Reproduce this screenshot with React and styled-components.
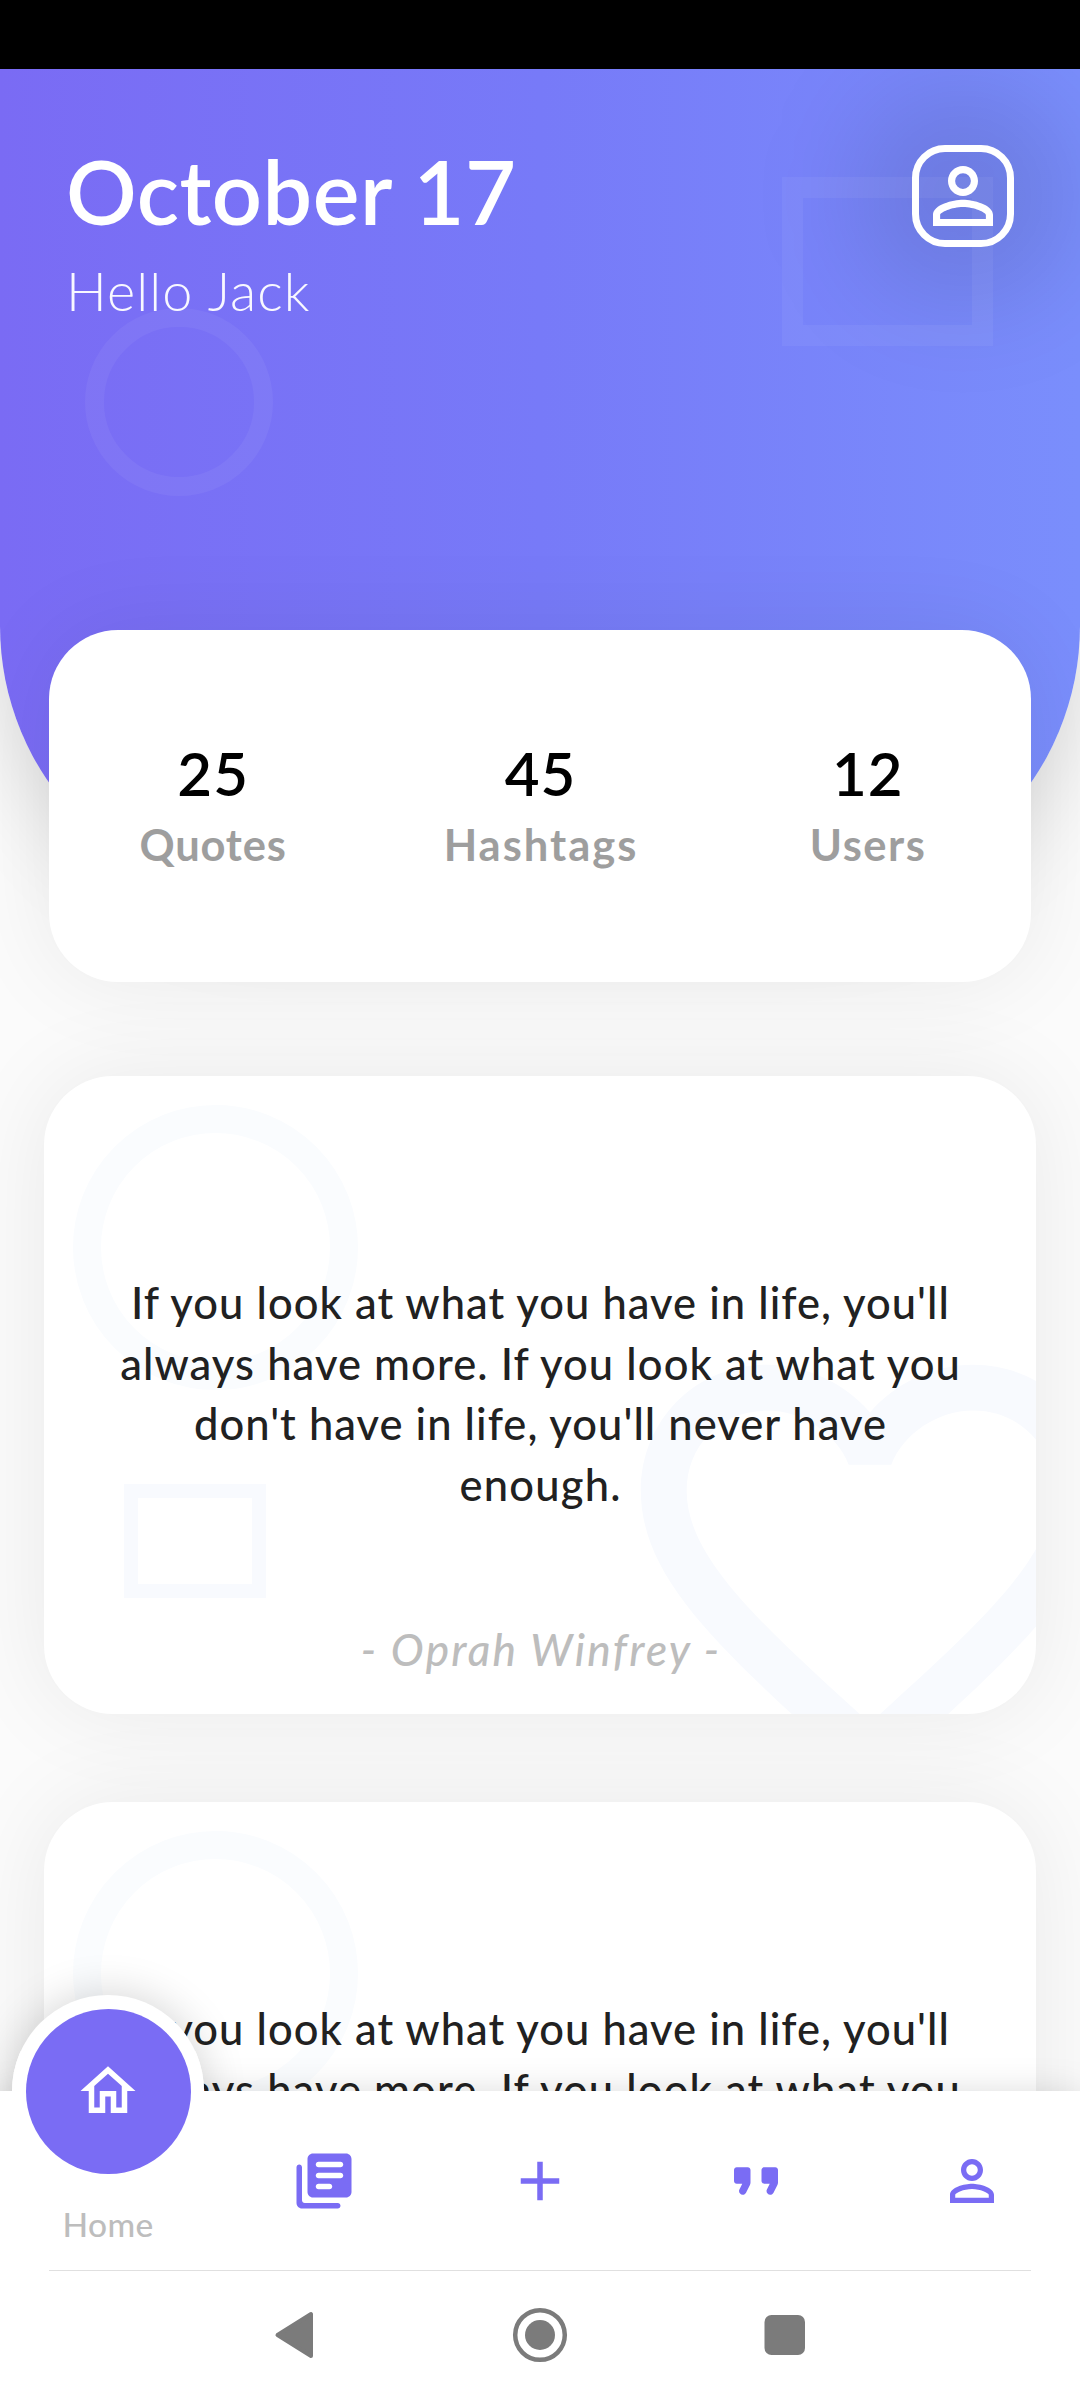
import React from "react";
import styled, { createGlobalStyle, css } from "styled-components";
import { MdAdd, MdPersonOutline } from "react-icons/md";

const PURPLE = "#7a6cf4";

const GlobalStyle = createGlobalStyle`
  * { box-sizing: border-box; }
  html, body { margin: 0; padding: 0; background: #fbfbfb; }
  body { font-family: Lato, "Open Sans", sans-serif; }
  svg { display: block; }
`;

const Screen = styled.div`
  width: 1080px;
  height: 2400px;
  display: flex;
  flex-direction: column;
  overflow: hidden;
  background: #fbfbfb;
`;

const StatusBar = styled.div`
  flex: none;
  height: 69px;
  background: #000;
`;

const Content = styled.main`
  flex: 1;
  min-height: 0;
  overflow: hidden;
  display: flex;
  flex-direction: column;
`;

const Header = styled.header`
  position: relative;
  isolation: isolate;
  flex: none;
  height: 832px;
  padding: 76px 66px 0;
  display: flex;
  justify-content: space-between;
  align-items: flex-start;
  border-radius: 0 0 275px 275px;
  background: linear-gradient(90deg, #7a6bf4 0%, #777af8 50%, #7a8efc 100%);
  box-shadow: 0 20px 90px rgba(0, 0, 0, 0.14);
`;

const Greeting = styled.div`
  display: flex;
  flex-direction: column;
  margin-top: -4px;
`;

const DateTitle = styled.h1`
  margin: 0;
  font-size: 88px;
  line-height: 100px;
  font-weight: 600;
  letter-spacing: 0.5px;
  white-space: nowrap;
  color: #fff;
`;

const Hello = styled.div`
  margin-top: 17px;
  font-size: 54px;
  line-height: 66px;
  font-weight: 300;
  letter-spacing: 1.1px;
  white-space: nowrap;
  color: rgba(255, 255, 255, 0.95);
`;

const Avatar = styled.button`
  position: relative;
  width: 102px;
  height: 102px;
  padding: 0;
  display: flex;
  align-items: center;
  justify-content: center;
  border: 7px solid #fff;
  border-radius: 33px;
  background: none;
  color: #fff;

  &::before {
    content: "";
    position: absolute;
    z-index: -1;
    inset: -62px;
    border-radius: 90px;
    background: rgba(0, 0, 0, 0.1);
    filter: blur(50px);
  }

  svg {
    flex: none;
  }
`;

const Outline = styled.span`
  position: absolute;
  z-index: ${(p) => (p.$behind ? -1 : 0)};
  left: ${(p) => p.$x}px;
  top: ${(p) => p.$y}px;
  width: ${(p) => p.$w}px;
  height: ${(p) => p.$h}px;
  border: ${(p) => p.$line}px solid ${(p) => p.$color};
  border-radius: ${(p) => (p.$round ? "50%" : "0")};
`;

const cardBase = css`
  flex: none;
  background: #fff;
  border-radius: 69px;
  box-shadow: 0 0 95px rgba(0, 0, 0, 0.075);
`;

const StatsCard = styled.section`
  ${cardBase}
  position: relative;
  height: 352px;
  margin: -271px 49px 0;
  display: grid;
  grid-template-columns: repeat(3, 1fr);
  align-content: center;
`;

const Stat = styled.div`
  display: flex;
  flex-direction: column;
  align-items: center;
`;

const StatValue = styled.div`
  margin-top: -4px;
  margin-right: -1px;
  font-size: 60px;
  line-height: 76px;
  font-weight: 600;
  letter-spacing: 1px;
  color: #000;
`;

const StatLabel = styled.div`
  margin-top: 3px;
  font-size: 43.5px;
  line-height: 60px;
  font-weight: 700;
  letter-spacing: ${(p) => p.$track}px;
  margin-right: ${(p) => -p.$track}px;
  color: #9e9e9e;
`;

const QuoteList = styled.section`
  flex: none;
  display: flex;
  flex-direction: column;
  gap: 88px;
  padding: 94px 44px 0;
`;

const QuoteCard = styled.article`
  ${cardBase}
  position: relative;
  isolation: isolate;
  height: 638px;
  padding-top: 196px;
  display: flex;
  flex-direction: column;
  align-items: center;
`;

const Decoration = styled.div`
  position: absolute;
  z-index: -1;
  inset: 0;
  overflow: hidden;
  border-radius: 69px;
`;

const HeartIcon = styled.svg`
  position: absolute;
  left: 551px;
  top: 220px;
  width: 550px;
  height: 550px;
  fill: #f8fafe;
`;

const QuoteText = styled.p`
  margin: 0;
  display: flex;
  flex-direction: column;
  align-items: center;
  color: #212121;
`;

const QuoteLine = styled.span`
  font-size: 43.5px;
  line-height: 60.5px;
  font-weight: 500;
  white-space: nowrap;
  letter-spacing: ${(p) => p.$track}px;
  margin-right: ${(p) => -p.$track}px;
`;

const Author = styled.div`
  margin-top: 105px;
  font-size: 44px;
  line-height: 60px;
  font-weight: 500;
  font-style: italic;
  letter-spacing: 2.3px;
  margin-right: -2.3px;
  white-space: nowrap;
  color: #bdbdbd;
`;

const BottomNav = styled.nav`
  position: relative;
  isolation: isolate;
  flex: none;
  height: 309px;
`;

const ActiveRing = styled.span`
  position: absolute;
  left: 12px;
  top: -96px;
  width: 192px;
  height: 192px;
  border-radius: 50%;
  background: #fff;
  box-shadow: 0 0 44px rgba(0, 0, 0, 0.18);
`;

const NavBody = styled.div`
  position: relative;
  height: 100%;
  display: flex;
  flex-direction: column;
  background: #fff;
  box-shadow: 0 10px 40px rgba(0, 0, 0, 0.22);
`;

const RingBase = styled.span`
  position: absolute;
  left: 12px;
  top: -40px;
  width: 192px;
  height: 40px;
  overflow: hidden;

  &::before {
    content: "";
    display: block;
    width: 192px;
    height: 192px;
    margin-top: -56px;
    border-radius: 50%;
    background: #fff;
  }
`;

const Tabs = styled.div`
  position: relative;
  flex: none;
  height: 178px;
  margin-bottom: 1px;
  display: grid;
  grid-template-columns: repeat(5, 1fr);
`;

const Tab = styled.div`
  display: flex;
  flex-direction: column;
  align-items: center;
  padding-top: ${(p) => (p.$active ? 0 : 57)}px;
  color: ${PURPLE};
`;

const ActiveButton = styled.div`
  flex: none;
  width: 165px;
  height: 165px;
  margin-top: -82.5px;
  display: flex;
  align-items: center;
  justify-content: center;
  border-radius: 50%;
  background: ${PURPLE};
  color: #fff;
`;

const TabLabel = styled.div`
  margin-top: 30px;
  font-size: 33.5px;
  line-height: 40px;
  font-weight: 500;
  letter-spacing: 0.4px;
  color: #bdbdbd;
`;

const SystemBar = styled.div`
  flex: 1;
  margin: 0 49px;
  padding-bottom: 2px;
  border-top: 1px solid #e0e0e0;
  display: flex;
  align-items: center;
  justify-content: center;
  gap: 191px;
  color: #7b7b7b;
`;

const Icon = ({ d, size = 66 }) => (
  <svg width={size} height={size} viewBox="0 0 24 24" fill="currentColor">
    <path d={d} />
  </svg>
);

const HOME =
  "M12 5.69l5 4.5V18h-2v-6H9v6H7v-7.81l5-4.5M12 3L2 12h3v8h6v-6h2v6h6v-8h3L12 3z";
const LIBRARY =
  "M3 6c-.55 0-1 .45-1 1v13c0 1.1.9 2 2 2h13c.55 0 1-.45 1-1s-.45-1-1-1H5c-.55 0-1-.45-1-1V7c0-.55-.45-1-1-1zm17-4H8c-1.1 0-2 .9-2 2v12c0 1.1.9 2 2 2h12c1.1 0 2-.9 2-2V4c0-1.1-.9-2-2-2zm-2 9h-8c-.55 0-1-.45-1-1s.45-1 1-1h8c.55 0 1 .45 1 1s-.45 1-1 1zm-4 4h-4c-.55 0-1-.45-1-1s.45-1 1-1h4c.55 0 1 .45 1 1s-.45 1-1 1zm4-8h-8c-.55 0-1-.45-1-1s.45-1 1-1h8c.55 0 1 .45 1 1s-.45 1-1 1z";
const QUOTE =
  "M7.17 17c.51 0 .98-.29 1.2-.74l1.42-2.84c.14-.28.21-.58.21-.89V8c0-.55-.45-1-1-1H5c-.55 0-1 .45-1 1v4c0 .55.45 1 1 1h2l-1.03 2.06c-.45.89.2 1.94 1.2 1.94zm10 0c.51 0 .98-.29 1.2-.74l1.42-2.84c.14-.28.21-.58.21-.89V8c0-.55-.45-1-1-1h-4c-.55 0-1 .45-1 1v4c0 .55.45 1 1 1h2l-1.03 2.06c-.45.89.2 1.94 1.2 1.94z";
const HEART =
  "M12.1 18.55l-.1.1-.11-.1C7.14 14.24 4 11.39 4 8.5 4 6.5 5.5 5 7.5 5c1.54 0 3.04 1 3.57 2.36h1.86C13.46 6 14.96 5 16.5 5c2 0 3.5 1.5 3.5 3.5 0 2.89-3.14 5.74-7.9 10.05M16.5 3c-1.74 0-3.41.81-4.5 2.08C10.91 3.81 9.24 3 7.5 3 4.42 3 2 5.41 2 8.5c0 3.77 3.4 6.86 8.55 11.53L12 21.35l1.45-1.32C18.6 15.36 22 12.27 22 8.5 22 5.41 19.58 3 16.5 3z";

const STATS = [
  { value: "25", label: "Quotes", track: 0.8 },
  { value: "45", label: "Hashtags", track: 2 },
  { value: "12", label: "Users", track: 1.5 },
];

const QUOTE_LINES = [
  { text: "If you look at what you have in life, you'll", track: 1.04 },
  { text: "always have more. If you look at what you", track: 1.08 },
  { text: "don't have in life, you'll never have", track: 1.03 },
  { text: "enough.", track: 1.2 },
];

function Quote() {
  return (
    <QuoteCard>
      <Decoration>
        <Outline $x={29} $y={29} $w={285} $h={285} $line={28} $color="#fafcfe" $round />
        <Outline $x={80} $y={408} $w={142} $h={114} $line={14} $color="#f8fafe" />
        <HeartIcon viewBox="0 0 24 24">
          <path d={HEART} />
        </HeartIcon>
      </Decoration>
      <QuoteText>
        {QUOTE_LINES.map((line) => (
          <QuoteLine key={line.text} $track={line.track}>
            {line.text}
          </QuoteLine>
        ))}
      </QuoteText>
      <Author>- Oprah Winfrey -</Author>
    </QuoteCard>
  );
}

export default function App() {
  return (
    <>
      <GlobalStyle />
      <Screen>
        <StatusBar />
        <Content>
          <Header>
            <Greeting>
              <DateTitle>October 17</DateTitle>
              <Hello>Hello Jack</Hello>
            </Greeting>
            <Avatar>
              <MdPersonOutline size={90} />
            </Avatar>
            <Outline $x={85} $y={239} $w={188} $h={188} $line={19} $color="rgba(255,255,255,0.05)" $round $behind />
            <Outline $x={782} $y={108} $w={211} $h={169} $line={21} $color="rgba(255,255,255,0.05)" $behind />
          </Header>
          <StatsCard>
            {STATS.map((stat) => (
              <Stat key={stat.label}>
                <StatValue>{stat.value}</StatValue>
                <StatLabel $track={stat.track}>{stat.label}</StatLabel>
              </Stat>
            ))}
          </StatsCard>
          <QuoteList>
            <Quote />
            <Quote />
          </QuoteList>
        </Content>
        <BottomNav>
          <ActiveRing />
          <NavBody>
            <RingBase />
            <Tabs>
              <Tab $active>
                <ActiveButton>
                  <Icon d={HOME} />
                </ActiveButton>
                <TabLabel>Home</TabLabel>
              </Tab>
              <Tab>
                <Icon d={LIBRARY} />
              </Tab>
              <Tab>
                <MdAdd size={66} />
              </Tab>
              <Tab>
                <Icon d={QUOTE} />
              </Tab>
              <Tab>
                <MdPersonOutline size={66} />
              </Tab>
            </Tabs>
            <SystemBar>
              <svg width="54" height="54" viewBox="0 0 54 54" fill="currentColor" stroke="currentColor" strokeWidth="4" strokeLinejoin="round">
                <path d="M10.500 27L44 6v42z" />
              </svg>
              <svg width="56" height="56" viewBox="0 0 56 56">
                <circle cx="28" cy="28" r="24.800" fill="none" stroke="currentColor" strokeWidth="4.500" />
                <circle cx="28" cy="28" r="15" fill="currentColor" />
              </svg>
              <svg width="54" height="54" viewBox="0 0 54 54">
                <rect x="5.500" y="7" width="40.500" height="40" rx="7" fill="currentColor" />
              </svg>
            </SystemBar>
          </NavBody>
        </BottomNav>
      </Screen>
    </>
  );
}
